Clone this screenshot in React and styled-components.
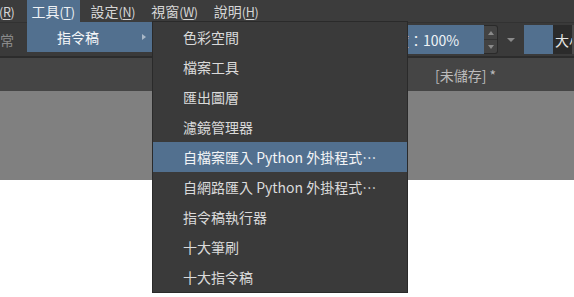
import styled, { createGlobalStyle } from "styled-components";

const GlobalStyle = createGlobalStyle`
  body {
    margin: 0;
    background: #ffffff;
    font-family: "Noto Sans CJK TC", "Noto Sans", sans-serif;
  }
`;

const menuTitles = [
  { label: "", key: "R", first: true },
  { label: "工具", key: "T", active: true },
  { label: "設定", key: "N" },
  { label: "視窗", key: "W" },
  { label: "說明", key: "H" },
];

const scriptItems = [
  "色彩空間",
  "檔案工具",
  "匯出圖層",
  "濾鏡管理器",
  "自檔案匯入 Python 外掛程式…",
  "自網路匯入 Python 外掛程式…",
  "指令稿執行器",
  "十大筆刷",
  "十大指令稿",
];

export default function App() {
  return (
    <>
      <GlobalStyle />
      <Page>
        <MenuBar>
          {menuTitles.map((m) => (
            <MenuTitle key={m.key} $active={m.active} $first={m.first}>
              {m.label}
              <Mnemonic>
                (<u>{m.key}</u>)
              </Mnemonic>
            </MenuTitle>
          ))}
        </MenuBar>

        <Toolbar>
          <BlendLabel>常</BlendLabel>
          <Spacer />
          <OpacityField>不透明度：100%</OpacityField>
          <Spinner>
            <SpinUp />
            <SpinDown />
          </Spinner>
          <ComboArrow>
            <Caret />
          </ComboArrow>
          <Swatch />
          <SizeBox>大小</SizeBox>
        </Toolbar>

        <TabBar>
          <TabTitle>[未儲存] *</TabTitle>
        </TabBar>

        <Canvas />

        <SubMenuEntry>
          指令稿
          <RightArrow />
        </SubMenuEntry>

        <Dropdown>
          {scriptItems.map((item, i) => (
            <DropItem key={item} $selected={i === 4}>
              {item}
            </DropItem>
          ))}
        </Dropdown>
      </Page>
    </>
  );
}

const Page = styled.div`
  position: relative;
  width: 574px;
  height: 297px;
  overflow: hidden;
  background: #ffffff;
`;

const MenuBar = styled.div`
  display: flex;
  align-items: stretch;
  gap: 6px;
  height: 22px;
  background: #3c3c3c;
`;

const MenuTitle = styled.div`
  display: flex;
  align-items: center;
  padding: ${(p) => (p.$first ? "0 6px 0 0" : "0 5px")};
  margin-left: ${(p) => (p.$first ? "-1px" : "0")};
  font-size: 14px;
  color: ${(p) => (p.$active ? "#eef2f6" : "#d6d6d6")};
  background: ${(p) => (p.$active ? "#52708f" : "transparent")};
  white-space: nowrap;
`;

const Mnemonic = styled.span`
  font-size: 12.5px;
  letter-spacing: -0.3px;
  u {
    text-decoration-thickness: 1px;
    text-underline-offset: 2px;
  }
`;

const Toolbar = styled.div`
  display: flex;
  align-items: center;
  height: 33px;
  background: #3a3a3a;
  border-top: 1px solid #323232;
  border-bottom: 2px solid #2c2c2c;
`;

const BlendLabel = styled.span`
  font-size: 14px;
  color: #8a8a8a;
`;

const Spacer = styled.div`
  flex: 1;
`;

const OpacityField = styled.div`
  display: flex;
  align-items: center;
  width: 136px;
  height: 29px;
  box-sizing: border-box;
  padding-left: 5px;
  background: #52708f;
  color: #eef2f6;
  font-size: 14px;
  white-space: nowrap;
`;

const Spinner = styled.div`
  display: flex;
  flex-direction: column;
  width: 14px;
  height: 29px;
  box-sizing: border-box;
  border: 1px solid #2a2a2a;
  border-left: none;
  border-radius: 0 3px 3px 0;
  background: #434343;
`;

const SpinHalf = styled.div`
  flex: 1;
  display: flex;
  align-items: center;
  justify-content: center;
  &::after {
    content: "";
    border-left: 3px solid transparent;
    border-right: 3px solid transparent;
  }
`;

const SpinUp = styled(SpinHalf)`
  border-bottom: 1px solid #333333;
  &::after {
    border-bottom: 4px solid #8a8a8a;
  }
`;

const SpinDown = styled(SpinHalf)`
  &::after {
    border-top: 4px solid #8a8a8a;
  }
`;

const ComboArrow = styled.div`
  display: flex;
  align-items: center;
  justify-content: center;
  width: 26px;
  height: 29px;
`;

const Caret = styled.div`
  border-left: 4px solid transparent;
  border-right: 4px solid transparent;
  border-top: 4px solid #8a8a8a;
`;

const Swatch = styled.div`
  width: 29px;
  height: 29px;
  background: #52708f;
`;

const SizeBox = styled.div`
  display: flex;
  align-items: center;
  width: 17px;
  height: 29px;
  padding-left: 2px;
  overflow: hidden;
  white-space: nowrap;
  background: #2b2b2b;
  color: #e6e6e6;
  font-size: 14px;
  border-right: 2px solid #4a4a4a;
`;

const TabBar = styled.div`
  display: flex;
  align-items: center;
  height: 33px;
  padding-left: 435px;
  background: #454545;
`;

const TabTitle = styled.span`
  font-size: 14px;
  color: #bcbcbc;
  white-space: nowrap;
`;

const Canvas = styled.div`
  height: 89px;
  background: #808080;
`;

const SubMenuEntry = styled.div`
  position: absolute;
  left: 27px;
  top: 22px;
  width: 125px;
  height: 30px;
  box-sizing: border-box;
  display: flex;
  align-items: center;
  padding-left: 30px;
  background: #52708f;
  color: #f4f6f8;
  font-size: 14px;
`;

const RightArrow = styled.span`
  margin-left: auto;
  margin-right: 6px;
  border-top: 3px solid transparent;
  border-bottom: 3px solid transparent;
  border-left: 4px solid #a9b8c8;
`;

const Dropdown = styled.div`
  position: absolute;
  left: 152px;
  top: 21px;
  width: 256px;
  box-sizing: border-box;
  display: flex;
  flex-direction: column;
  background: #3a3a3a;
  border: 1px solid #2a2a2a;
`;

const DropItem = styled.div`
  display: flex;
  align-items: center;
  height: 30px;
  padding-left: 30px;
  font-size: 14px;
  white-space: nowrap;
  color: ${(p) => (p.$selected ? "#f2f4f6" : "#dadada")};
  background: ${(p) => (p.$selected ? "#52708f" : "transparent")};
`;
